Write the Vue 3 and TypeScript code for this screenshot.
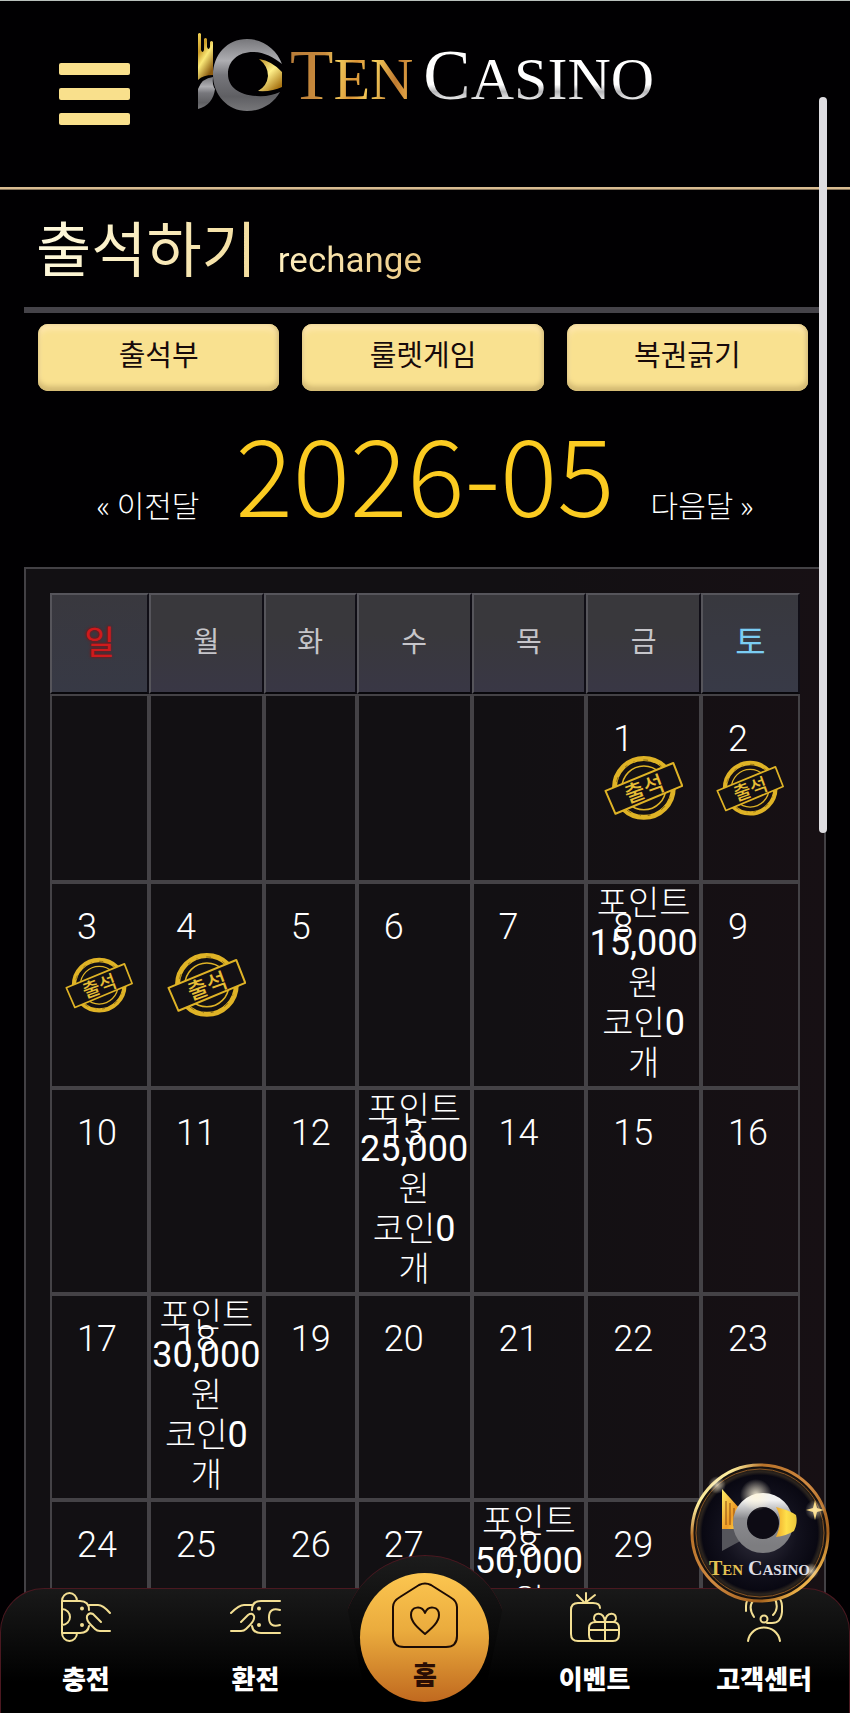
<script setup lang="ts">
interface Reward {
  points: string
  coins: number
}
interface Day {
  date: number | null
  stamped?: boolean
  reward?: Reward
}

const weekdays = ['일', '월', '화', '수', '목', '금', '토']
const tabs = ['출석부', '룰렛게임', '복권긁기']

const stampedDays = [1, 2, 3, 4]
const rewards: Record<number, Reward> = {
  8: { points: '15,000', coins: 0 },
  13: { points: '25,000', coins: 0 },
  18: { points: '30,000', coins: 0 },
  28: { points: '50,000', coins: 0 },
}

const firstWeekday = 5
const weeks: Day[][] = Array.from({ length: 5 }, (_, w) =>
  Array.from({ length: 7 }, (_, d) => {
    const date = w * 7 + d - firstWeekday + 1
    if (date < 1) return { date: null }
    return { date, stamped: stampedDays.includes(date), reward: rewards[date] }
  }),
)
</script>

<template>
  <div class="screen">
    <header class="header">
      <button class="menu" type="button" aria-label="메뉴">
        <span></span><span></span><span></span>
      </button>
      <a class="logo" href="#" aria-label="Ten Casino">
        <svg class="mark" viewBox="0 0 84 78" aria-hidden="true">
          <defs>
            <linearGradient id="lg-gold" x1="0" y1="0" x2="0.5" y2="1">
              <stop offset="0" stop-color="#f5d75a" />
              <stop offset="0.35" stop-color="#c99a26" />
              <stop offset="0.6" stop-color="#fbe978" />
              <stop offset="1" stop-color="#8a5a10" />
            </linearGradient>
            <linearGradient id="lg-eye" x1="0" y1="0" x2="0.7" y2="1">
              <stop offset="0" stop-color="#b98a22" />
              <stop offset="0.5" stop-color="#fff08a" />
              <stop offset="1" stop-color="#a87413" />
            </linearGradient>
            <linearGradient id="lg-steel" x1="0" y1="0" x2="0" y2="1">
              <stop offset="0" stop-color="#77777b" />
              <stop offset="0.3" stop-color="#aeaeb2" />
              <stop offset="0.5" stop-color="#77777c" />
              <stop offset="0.8" stop-color="#5f5f63" />
              <stop offset="1" stop-color="#77777a" />
            </linearGradient>
          </defs>
          <path d="M0 1Q1.5-1 3 1V17Q4.500 21 6 17V6Q7.500 4 9 6V14Q10.500 18 12 14V9Q13.500 7 15 9V42Q5 42 0 47Z" fill="url(#lg-gold)" />
          <path d="M0 56Q4 45 15 44Q14 52 17 56Q15 72 0 76Z" fill="url(#lg-steel)" />
          <path d="M84 31C79 17 66 6 49 6C29 6 15 22 15 42C15 62 30 78 49 78C64 78 76 70 82 59Q72 64 58 63C41 62 30 54 30 41C30 28 40 19 55 19C66 19 75 24 84 31Z" fill="url(#lg-steel)" />
          <path d="M61 26Q74 28 84 39V54Q74 59 60 58Q69 53 70 43Q70 33 61 26Z" fill="url(#lg-eye)" />
        </svg>
        <span class="word ten"><span class="cap">T</span>EN</span>
        <span class="word casino"><span class="cap">C</span>ASINO</span>
      </a>
    </header>

    <main class="main">
      <h1 class="title"><span>출석하기</span> <small>rechange</small></h1>

      <nav class="tabs" aria-label="이벤트 메뉴">
        <button v-for="tab in tabs" :key="tab" type="button">{{ tab }}</button>
      </nav>

      <div class="month">
        <a href="#">« 이전달</a>
        <h2>2026-05</h2>
        <a href="#">다음달 »</a>
      </div>

      <section class="panel">
        <table class="calendar">
          <thead>
            <tr>
              <th v-for="day in weekdays" :key="day" scope="col">{{ day }}</th>
            </tr>
          </thead>
          <tbody>
            <tr v-for="(week, w) in weeks" :key="w">
              <td v-for="(day, d) in week" :key="d">
                <span v-if="day.date" class="date">{{ day.date }}</span>
                <div v-if="day.stamped" class="stamp">
                  <svg viewBox="0 0 80 66" role="img" aria-label="출석">
                    <g fill="none" stroke="#dfb326">
                      <circle cx="40" cy="33" r="29.500" stroke-width="5" />
                      <circle cx="40" cy="33" r="28" stroke="#8a6a12" stroke-width="1" stroke-dasharray="3 7 1 9 5 12" />
                      <circle cx="40" cy="33" r="22" stroke-width="1.500" />
                      <path d="M1.500 36L69.500 8L78.500 31L11.500 59Z" fill="#131014" stroke-width="2" stroke-linejoin="round" />
                    </g>
                    <text x="40" y="42" transform="rotate(-20 40 33)" text-anchor="middle">출석</text>
                  </svg>
                </div>
                <p v-if="day.reward" class="reward">
                  포인트<br /><strong>{{ day.reward.points }}</strong><br />원<br />
                  코인<strong>{{ day.reward.coins }}</strong><br />개
                </p>
              </td>
            </tr>
          </tbody>
        </table>
      </section>
    </main>

    <div class="scroll-thumb"></div>

    <nav class="dock" aria-label="하단 메뉴">
      <a href="#">
        <svg viewBox="0 0 50 50" aria-hidden="true">
          <path d="M1 9A7.500 8 0 0 1 16 9M1 9V41A7.500 8 0 0 0 16 41M1 9H19Q28 9 28 18M28 34Q27 41 19 41H1M1 17A8 8 0 1 1 1 33" />
          <path d="M28 13H37Q42 13 49 21M40 30L32 22Q28 20 26 24Q25 28 30 33L34 37Q36 39 39 39H49" />
          <circle class="dot" cx="21" cy="16.500" r="2" /><circle class="dot" cx="21" cy="33" r="2" />
        </svg>
        <span>충전</span>
      </a>
      <a href="#">
        <svg viewBox="0 0 50 50" aria-hidden="true">
          <path d="M50 9H31Q22 9 22 18M22 34Q23 41 31 41H50M50 18Q39 15 39 25.500T50 33" />
          <path d="M22 13H14Q9 13 1 21M11 30L18 23Q22 20 24 24Q25 28 20 33L16 37Q14 39 11 39H1" />
          <circle class="dot" cx="29" cy="16.500" r="2" /><circle class="dot" cx="29" cy="33" r="2" />
        </svg>
        <span>환전</span>
      </a>
      <a class="home" href="#">
        <svg viewBox="0 0 66 66" aria-hidden="true">
          <path d="M8 15L27 3Q33 0 39 3L58 15Q65 19 65 25V54Q65 65 54 65H12Q1 65 1 54V25Q1 19 8 15Z" />
          <path d="M33 52C26 46 19 40 19 33C19 24 30 23 33 31C36 23 47 24 47 33C47 40 40 46 33 52Z" />
        </svg>
        <span>홈</span>
      </a>
      <a href="#">
        <svg viewBox="0 0 50 50" aria-hidden="true">
          <path d="M30 16Q30 11 23 11H8Q1 11 1 18V42Q1 49 8 49H43Q49 49 49 42V36Q49 30 43 30H26Q19 30 19 36V43Q19 49 25 49M16 1V11M7 3L15 11L25 3" />
          <path d="M35 30V49M19 38H49M35 30C34 19 23 20 24 27Q25 30 27 30M35 30C36 19 47 20 46 27Q45 30 43 30" />
        </svg>
        <span>이벤트</span>
      </a>
      <a href="#">
        <svg viewBox="0 0 50 50" aria-hidden="true">
          <path d="M7 19V14A18 15 0 0 1 43 14V20Q42 31 33 31H28M15 25Q7 13 18 5M35 5Q41 16 34 23M9 49C12 31 38 31 41 49" />
          <circle cx="25" cy="27" r="3.500" />
        </svg>
        <span>고객센터</span>
      </a>
    </nav>

    <a class="badge" href="#" aria-label="Ten Casino">
      <svg viewBox="0 0 140 140" aria-hidden="true">
        <defs>
          <radialGradient id="bg-disc" cx="0.5" cy="0.5" r="0.5">
            <stop offset="0" stop-color="#353341" />
            <stop offset="0.55" stop-color="#12111d" />
            <stop offset="0.85" stop-color="#090812" />
            <stop offset="0.9" stop-color="#2b241e" />
            <stop offset="1" stop-color="#0c0908" />
          </radialGradient>
          <linearGradient id="bg-rim" x1="0" y1="0" x2="1" y2="1">
            <stop offset="0" stop-color="#9c5b20" />
            <stop offset="0.16" stop-color="#fff0a0" />
            <stop offset="0.26" stop-color="#b9732a" />
            <stop offset="0.5" stop-color="#d08a42" />
            <stop offset="0.75" stop-color="#a3601c" />
            <stop offset="0.86" stop-color="#f0b64c" />
            <stop offset="1" stop-color="#7a4316" />
          </linearGradient>
          <linearGradient id="bg-flame" x1="0" y1="0" x2="1" y2="1">
            <stop offset="0" stop-color="#fff067" />
            <stop offset="0.6" stop-color="#f09b25" />
            <stop offset="1" stop-color="#ffe24d" />
          </linearGradient>
          <linearGradient id="bg-iris" x1="0" y1="0" x2="1" y2="0">
            <stop offset="0" stop-color="#eea82a" />
            <stop offset="0.5" stop-color="#ffdf4a" />
            <stop offset="1" stop-color="#e9c63c" />
          </linearGradient>
          <linearGradient id="bg-silver" x1="0" y1="0" x2="0" y2="1">
            <stop offset="0" stop-color="#f2f2f2" />
            <stop offset="0.4" stop-color="#8b8b8f" />
            <stop offset="1" stop-color="#7d7d80" />
          </linearGradient>
          <radialGradient id="bg-glow">
            <stop offset="0" stop-color="#fff6dc" stop-opacity="0.9" />
            <stop offset="1" stop-color="#fff6dc" stop-opacity="0" />
          </radialGradient>
        </defs>
        <circle cx="70" cy="70" r="68" fill="url(#bg-disc)" stroke="url(#bg-rim)" stroke-width="3" />
        <circle cx="70" cy="70" r="64" fill="none" stroke="#8a5624" stroke-width="1" />
        <path d="M32 66L48 58L54 76L32 88Z" fill="#55555b" />
        <path d="M32 26L50 46V66H32Z" fill="url(#bg-flame)" />
        <path d="M36 38V62M40 40V62M44 45V63" stroke="#8d4b13" stroke-width="1" />
        <circle cx="73" cy="60" r="23" fill="#0d0b14" stroke="url(#bg-silver)" stroke-width="14" />
        <circle cx="66" cy="32" r="16" fill="url(#bg-glow)" />
        <path d="M86 44Q99 47 106 52Q108 60 104 68Q96 73 86 74Q94 58 86 44Z" fill="url(#bg-iris)" />
        <path d="M125 37L127 45L134 47L127 49L125 57L123 49L116 47L123 45Z" fill="#f7d26a" />
        <circle cx="125" cy="47" r="10" fill="url(#bg-glow)" opacity="0.6" />
        <circle cx="27" cy="22" r="9" fill="url(#bg-glow)" opacity="0.8" />
        <circle cx="121" cy="108" r="8" fill="url(#bg-glow)" opacity="0.8" />
        <text x="19" y="112" fill="#e3c152"><tspan class="big">T</tspan>EN</text>
        <text x="58" y="112" fill="#dedee4"><tspan class="big">C</tspan>ASINO</text>
      </svg>
    </a>
  </div>
</template>

<style>
html,
body {
  margin: 0;
  background: #000;
}
</style>

<style scoped>
* {
  box-sizing: border-box;
}
a {
  color: inherit;
  text-decoration: none;
}
button {
  border: 0;
  font: inherit;
}
.screen {
  position: relative;
  height: 100vh;
  overflow: hidden;
  background: #010002;
  color: #fff;
  font-family: Roboto, 'Noto Sans CJK KR', sans-serif;
}
.header {
  display: flex;
  align-items: flex-start;
  gap: 68px;
  height: 190px;
  padding: 32px 59px 0;
  border-top: 1px solid #b9c0bc;
  border-bottom: 3px ridge #d9bc92;
}
.menu {
  display: flex;
  flex-direction: column;
  gap: 13px;
  width: 71px;
  margin-top: 30px;
  padding: 0;
  background: none;
}
.menu span {
  height: 12px;
  border-radius: 2px;
  background: #f9e08c;
}
.logo {
  display: flex;
  align-items: baseline;
}
.mark {
  align-self: flex-start;
  width: 84px;
  height: 78px;
  margin-right: 8px;
}
.word {
  font-family: 'Liberation Serif', serif;
  font-size: 60px;
  line-height: 85px;
  color: transparent;
  background-clip: text;
}
.cap {
  font-size: 71px;
}
.ten {
  margin-right: 10px;
  background-image: linear-gradient(100deg, #b97d3a 5%, #c98a3c 28%, #f3cf5f 38%, #d99235 52%, #f6cf5c 65%, #c07a30 82%, #e0a244 92%, #6d4a2a);
}
.casino {
  background-image: linear-gradient(#fff 45%, #fff 58%, #b5b5b8 66%, #fff 78%);
}
.main {
  padding: 0 24px;
}
.title {
  display: flex;
  align-items: baseline;
  gap: 21px;
  height: 123px;
  margin: 0 0 11px;
  padding: 14px 12px 0;
  border-bottom: 6px solid #454349;
  font-size: 60px;
  font-weight: 400;
  line-height: 84px;
}
.title span,
.title small {
  color: transparent;
  background: linear-gradient(100deg, #fffbe0, #f3dc9c);
  background-clip: text;
}
.title span {
  font-family: 'Noto Sans CJK KR', sans-serif;
}
.title small {
  font-size: 35px;
  line-height: 44px;
  background-image: linear-gradient(100deg, #fff0c0, #ecca85);
}
.tabs {
  display: grid;
  grid-template-columns: repeat(3, 1fr);
  gap: 23px;
  padding: 0 18px 0 14px;
}
.tabs button {
  height: 67px;
  padding: 0 0 10px;
  border-radius: 10px;
  background: #f9e190;
  box-shadow:
    inset 0 -5px 5px #d4bb74,
    inset -2px 0 4px #e0c883,
    inset 0 5px 6px #ffe8b4;
  color: #170a0a;
  font-family: 'Noto Sans CJK KR', sans-serif;
  font-size: 29px;
}
.month {
  display: flex;
  justify-content: center;
  align-items: baseline;
  gap: 36px;
  height: 176px;
  font-family: 'Noto Sans CJK KR', sans-serif;
  font-weight: 300;
  font-size: 30px;
}
.month h2 {
  margin: 0;
  color: #fbcb21;
  font-size: 107px;
  font-weight: 300;
  line-height: 160px;
}
.panel {
  padding: 24px;
  border: 2px solid #434145;
  background: linear-gradient(90deg, #121013 60%, #171014);
}
.calendar {
  width: 100%;
  table-layout: fixed;
  border-collapse: separate;
  border-spacing: 0;
}
th {
  width: 15.3%;
  height: 101px;
  padding: 0 0 8px;
  border: 2px solid;
  border-color: #56555b #100e16 #08070b #56555b;
  background: linear-gradient(#39383c 40%, #393745);
  color: #c6c5ca;
  font-family: 'Noto Sans CJK KR', sans-serif;
  font-size: 28px;
  font-weight: 400;
}
th:nth-child(3) {
  width: 12.4%;
}
th:first-child,
th:last-child {
  width: 13.2%;
  font-size: 33px;
}
th:first-child {
  background: linear-gradient(#39383e, #373945);
  color: #cf1a1c;
  text-shadow: 0 0 3px #a00000;
}
th:last-child {
  background: linear-gradient(#38383e, #383a47);
  color: #7bcdf3;
}
td {
  position: relative;
  height: 206px;
  padding: 23px 0 0 25px;
  border: 2px solid #444246;
  vertical-align: top;
}
tbody tr:first-child td {
  height: 188px;
}
.date {
  font-size: 36px;
  font-weight: 300;
  line-height: 40px;
}
.stamp {
  position: absolute;
  inset: 0;
  display: flex;
  align-items: center;
  justify-content: center;
}
.stamp svg {
  width: 72%;
}
.stamp text {
  fill: #e6bd35;
  font-family: 'Noto Sans CJK KR', sans-serif;
  font-size: 22px;
  font-weight: 500;
}
.reward {
  position: absolute;
  inset: -3px 0 0;
  margin: 0;
  font-family: 'Noto Sans CJK KR', sans-serif;
  font-size: 34px;
  font-weight: 300;
  line-height: 40px;
  text-align: center;
}
.reward strong {
  font-family: Roboto, sans-serif;
  font-size: 36px;
  font-weight: 400;
  line-height: 1;
}
.scroll-thumb {
  position: absolute;
  top: 97px;
  right: 23px;
  width: 8px;
  height: 736px;
  border-radius: 4px;
  background: #dedde1;
}
.dock {
  position: absolute;
  inset: auto 0 0;
  display: grid;
  grid-template-columns: repeat(5, 1fr);
  height: 125px;
  border: 1px solid #4b1820;
  border-bottom: 0;
  border-radius: 44px 44px 0 0;
  background: linear-gradient(#191919, #000 75%);
}
.dock::before {
  content: '';
  position: absolute;
  left: 50%;
  bottom: 0;
  width: 164px;
  height: 157px;
  border-top: 1px solid #4b1820;
  border-radius: 82px 82px 0 0;
  background: linear-gradient(#1c1c1c, #000 75%);
  clip-path: polygon(0 0, 100% 0, 100% 33px, 84% 100%, 16% 100%, 0 33px);
  transform: translateX(-50%);
}
.dock a {
  position: relative;
  display: flex;
  flex-direction: column;
  align-items: center;
  gap: 16px;
  padding-top: 3px;
  font-family: 'Noto Sans CJK KR', sans-serif;
  font-size: 26px;
  font-weight: 900;
  line-height: 40px;
  white-space: nowrap;
}
.dock svg {
  width: 50px;
  height: 50px;
  overflow: visible;
  fill: none;
  stroke: #f3df93;
  stroke-width: 2;
  stroke-linecap: round;
  stroke-linejoin: round;
}
.dock .dot {
  fill: #f3df93;
  stroke: none;
}
.dock .home {
  justify-self: center;
  gap: 6px;
  width: 129px;
  height: 129px;
  margin-top: -16px;
  padding-top: 9px;
  border-radius: 50%;
  background: linear-gradient(#fcc650, #eaab3d 45%, #c0691f);
  color: #2a0d04;
}
.dock .home svg {
  flex: none;
  width: 66px;
  height: 66px;
  stroke: #1c0b04;
}
.badge {
  position: absolute;
  right: 20px;
  bottom: 110px;
  width: 140px;
  height: 140px;
}
.badge svg {
  display: block;
}
.badge text {
  font-family: 'Liberation Serif', serif;
  font-size: 15px;
  font-weight: 700;
}
.badge .big {
  font-size: 20px;
}
</style>
